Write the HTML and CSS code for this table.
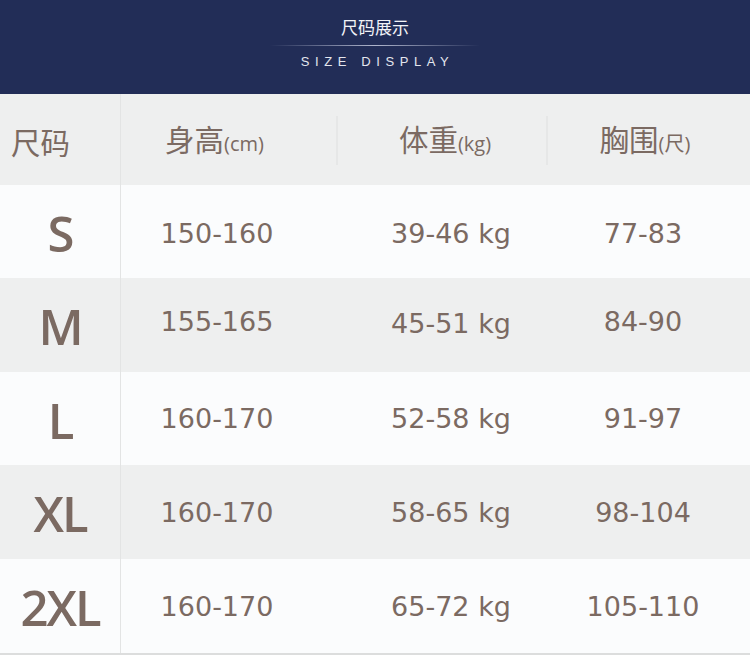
FILE: index.html
```html
<!DOCTYPE html>
<html lang="zh">
<head>
<meta charset="utf-8">
<link rel="stylesheet" href="styles.css">
</head>
<body>
<div class="page">
  <header class="banner">
    <div class="title">尺码展示</div>
    <div class="rule"></div>
    <div class="subtitle">SIZE DISPLAY</div>
  </header>
  <div class="table">
    <div class="row head">
      <div class="cell c1 lab"><span>尺码</span></div>
      <div class="cell c2 lab"><span>身高<small>(cm)</small></span><i class="sep"></i></div>
      <div class="cell c3 lab"><span>体重<small>(kg)</small></span><i class="sep"></i></div>
      <div class="cell c4 lab"><span>胸围<small>(尺)</small></span></div>
    </div>
    <div class="row first">
      <div class="cell c1 sz">S</div>
      <div class="cell c2 num">150-160</div>
      <div class="cell c3 num">39-46 kg</div>
      <div class="cell c4 num">77-83</div>
    </div>
    <div class="row alt mrow">
      <div class="cell c1 sz">M</div>
      <div class="cell c2 num up">155-165</div>
      <div class="cell c3 num">45-51 kg</div>
      <div class="cell c4 num up">84-90</div>
    </div>
    <div class="row">
      <div class="cell c1 sz">L</div>
      <div class="cell c2 num">160-170</div>
      <div class="cell c3 num">52-58 kg</div>
      <div class="cell c4 num">91-97</div>
    </div>
    <div class="row alt">
      <div class="cell c1 sz">XL</div>
      <div class="cell c2 num">160-170</div>
      <div class="cell c3 num">58-65 kg</div>
      <div class="cell c4 num">98-104</div>
    </div>
    <div class="row last">
      <div class="cell c1 sz">2XL</div>
      <div class="cell c2 num">160-170</div>
      <div class="cell c3 num">65-72 kg</div>
      <div class="cell c4 num">105-110</div>
    </div>
  </div>
</div>
</body>
</html>
```

FILE: styles.css
```css
* { box-sizing: border-box; margin: 0; padding: 0; }
html, body { width: 750px; height: 655px; overflow: hidden; background: #fbfcfd; }
body { font-family: "Noto Sans CJK SC", "Noto Sans", sans-serif; color: #7b6a62; }
.page { width: 750px; }
.banner {
  height: 94px;
  background: #222d57;
  display: flex;
  flex-direction: column;
  align-items: center;
  padding-top: 16px;
}
.title {
  font-family: "Noto Sans CJK SC", sans-serif;
  font-size: 17px;
  line-height: 22px;
  color: #f2f3f7;
}
.rule {
  width: 210px;
  height: 1px;
  margin-top: 7px;
  background: linear-gradient(to right, rgba(200,205,225,0), rgba(200,205,225,0.85) 50%, rgba(200,205,225,0));
}
.subtitle {
  font-family: "Liberation Sans", Arial, sans-serif;
  font-size: 13px;
  line-height: 16px;
  margin-top: 8px;
  letter-spacing: 5.6px;
  padding-left: 5px;
  color: #e4e6ee;
}
.table { display: flex; flex-direction: column; }
.row {
  display: grid;
  grid-template-columns: 121px 217px 210px 202px;
  height: 93px;
  background: #fbfcfd;
}
.row.head { height: 91px; background: #eeefef; }
.row.alt { height: 94px; background: #eeefef; }
.row.last { border-bottom: 3px solid #dcdddd; height: 97px; }
.cell {
  position: relative;
  display: flex;
  align-items: center;
  justify-content: center;
}
.c1 { border-right: 1px solid #e3e4e4; }
.c2 { padding-right: 25px; }
.c3 { padding-left: 16px; }
.c4 { padding-right: 12px; }
.lab { font-size: 29.5px; line-height: 40px; color: #7b6a62; padding-top: 2px; }
.lab small { font-size: 20px; font-family: "Open Sans", "Noto Sans CJK SC", sans-serif; }
.head .c1 { justify-content: flex-start; padding-left: 11px; }
.head .c2 { padding-right: 30px; }
.head .c3 { padding-left: 4px; }
.head .c4 { padding-right: 8px; }
.sep {
  position: absolute;
  right: 0;
  top: 22px;
  bottom: 20px;
  width: 2px;
  background: #e6e7e7;
}
.sz {
  font-family: "Open Sans", sans-serif;
  font-weight: 600;
  font-size: 49px;
  letter-spacing: -2px;
  padding-top: 2px;
}
.num {
  font-family: "DejaVu Sans", Verdana, sans-serif;
  font-size: 27px;
}
.first .num { padding-top: 4px; }
.mrow .num { padding-bottom: 4px; }
.mrow .num.up { padding-bottom: 8px; }
```
